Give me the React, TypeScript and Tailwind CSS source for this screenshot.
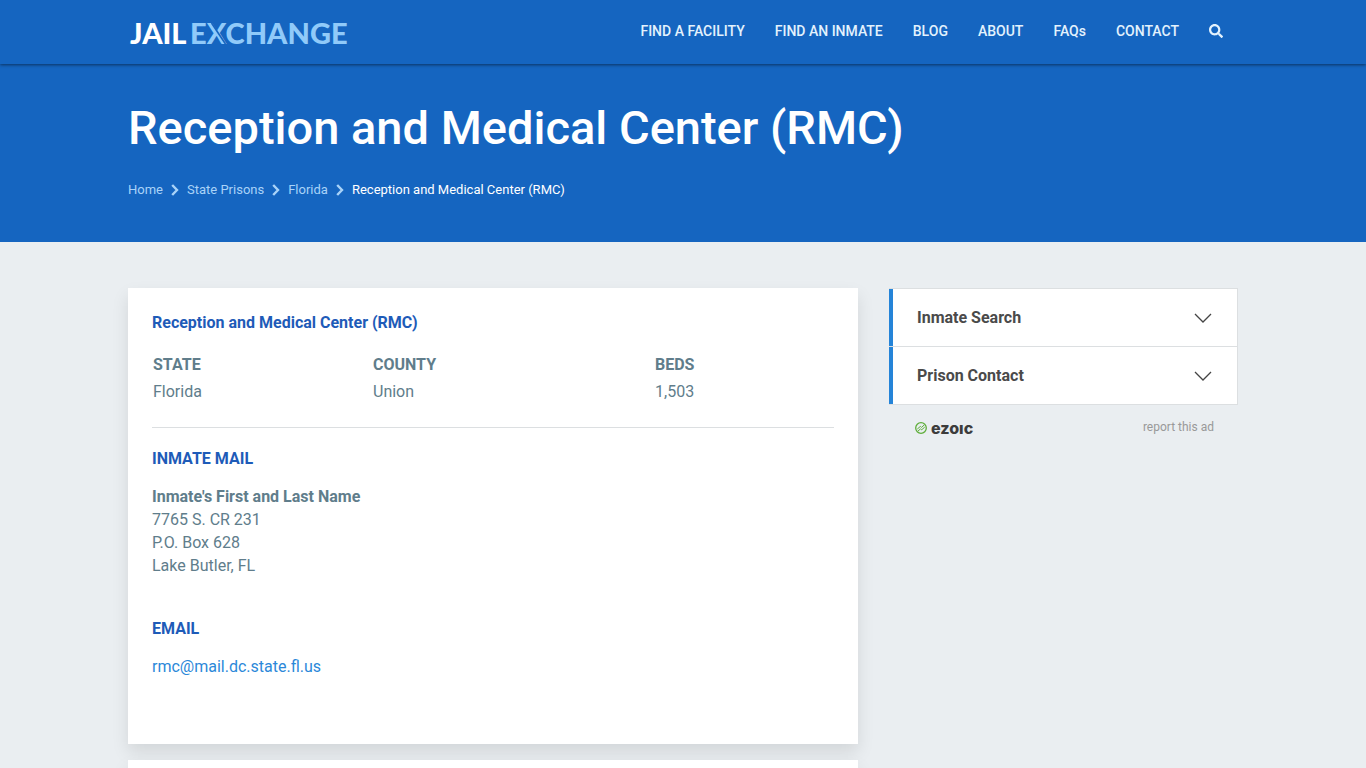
import React, { useState } from 'react';
import { FaSearch } from 'react-icons/fa';

const navLinks = ['FIND A FACILITY', 'FIND AN INMATE', 'BLOG', 'ABOUT', 'FAQs', 'CONTACT'];

const crumbs = ['Home', 'State Prisons', 'Florida'];

const panels = [
  { title: 'Inmate Search', body: 'Search the Florida state inmate list.' },
  { title: 'Prison Contact', body: '7765 S. CR 231, Lake Butler, FL' },
];

const Logo: React.FC = () => (
  <a href="#" aria-label="Jail Exchange">
    <svg width="232" height="44" viewBox="0 0 232 44" fontFamily="Lato, sans-serif" fontSize="29" fontWeight="900">
      <text x="2" y="34" fill="#ffffff">JAIL</text>
      <text x="62" y="34" fill="#90caf9">EXCHANGE</text>
      {/* slit along the X's long stroke */}
      <path d="M83.5 13L97.5 34" stroke="#1565c0" strokeWidth="1.6" />
    </svg>
  </a>
);

const CrumbArrow: React.FC = () => (
  <svg width="8" height="12" viewBox="0 0 8 12" fill="none" stroke="#a9d3f8" strokeWidth="2.4" aria-hidden="true">
    <path d="M1.2 1L6 6L1.2 11" />
  </svg>
);

const EzoicLogo: React.FC = () => (
  <a href="#" className="flex items-center gap-1 font-['Inter',sans-serif] text-base leading-4 font-extrabold text-[#3c3c3c]">
    <svg width="12" height="12" viewBox="0 0 12 12" fill="none" stroke="#5fae3b" aria-hidden="true">
      <circle cx="6" cy="6" r="5.3" strokeWidth="1.3" />
      <path d="M2.3 7L5.4 4.4L6.4 5.4L9 3.2M3 9L5.6 6.8L6.6 7.8L9.7 5.2" strokeWidth="1" />
    </svg>
    ezoıc
  </a>
);

const App: React.FC = () => {
  const [open, setOpen] = useState(-1);

  return (
    <div className="min-h-screen bg-[#eaeef1] font-['Roboto',sans-serif] text-base text-[#607d8b]">
      <header className="relative bg-[#1565c0] shadow-[0_1px_3px_rgba(0,0,0,0.5)]">
        <div className="mx-auto flex h-16 max-w-[1110px] items-center justify-between">
          <Logo />
          <nav className="flex items-center gap-[30px] pr-[15px] pb-0.5 text-sm font-medium text-[#e3f2fd]">
            {navLinks.map((link) => (
              <a key={link} href="#">{link}</a>
            ))}
            <button aria-label="Search" className="cursor-pointer">
              <FaSearch size={14} />
            </button>
          </nav>
        </div>
      </header>

      <section className="bg-[#1565c0] pt-8 pb-[43px] text-white">
        <div className="mx-auto max-w-[1110px]">
          <h1 className="text-[47px] leading-16 font-medium">Reception and Medical Center (RMC)</h1>
          <nav aria-label="Breadcrumb" className="mt-[21px] flex items-center gap-2 text-[13px] leading-[18px] text-[#a9d3f8]">
            {crumbs.map((crumb) => (
              <React.Fragment key={crumb}>
                <a href="#">{crumb}</a>
                <CrumbArrow />
              </React.Fragment>
            ))}
            <span className="text-white">Reception and Medical Center (RMC)</span>
          </nav>
        </div>
      </section>

      <div className="mx-auto flex max-w-[1110px] items-start gap-[30px] pt-[46px]">
        <main className="flex-1 space-y-4">
          <article className="bg-white px-6 pt-[25px] pb-[66px] shadow-[0_8px_16px_rgba(0,0,0,0.1)]">
            <h2 className="leading-5 font-bold text-[#1e5bb8]">Reception and Medical Center (RMC)</h2>
            <table className="mt-[19px] w-full text-left">
              <thead>
                <tr>
                  <th className="w-[220px] p-px font-bold">STATE</th>
                  <th className="w-[282px] p-px font-bold">COUNTY</th>
                  <th className="p-px font-bold">BEDS</th>
                </tr>
              </thead>
              <tbody>
                <tr>
                  <td className="p-px pt-0.5">Florida</td>
                  <td className="p-px pt-0.5">Union</td>
                  <td className="p-px pt-0.5">1,503</td>
                </tr>
              </tbody>
            </table>
            <hr className="mt-[22px] border-[#dcdfe1]" />

            <h3 className="mt-[21px] leading-5 font-bold text-[#1e5bb8]">INMATE MAIL</h3>
            <address className="mt-4 leading-[23px] not-italic">
              <strong className="font-bold">Inmate's First and Last Name</strong><br />
              7765 S. CR 231<br />
              P.O. Box 628<br />
              Lake Butler, FL
            </address>

            <h3 className="mt-[42px] leading-5 font-bold text-[#1e5bb8]">EMAIL</h3>
            <p className="mt-4 leading-[23px]">
              <a href="mailto:rmc@mail.dc.state.fl.us" className="text-[#2b88d9]">rmc@mail.dc.state.fl.us</a>
            </p>
          </article>
          <article className="h-24 bg-white shadow-[0_8px_16px_rgba(0,0,0,0.1)]" />
        </main>

        <aside className="w-[350px]">
          <div className="ml-px border-t border-r border-[#dcdfe1]">
            {panels.map((panel, i) => (
              <div key={panel.title} className="border-b border-[#dcdfe1]">
                <button
                  aria-expanded={open === i}
                  onClick={() => setOpen(open === i ? -1 : i)}
                  className="flex h-[57px] w-full cursor-pointer items-center justify-between border-l-4 border-[#2584d8] bg-white px-6 font-bold text-[#4a4a4a]"
                >
                  {panel.title}
                  <svg width="20" height="12" viewBox="0 0 20 12" fill="none" stroke="#444444" strokeWidth="1.3" aria-hidden="true">
                    <path d="M2 2L10 10L18 2" />
                  </svg>
                </button>
                {open === i && <p className="bg-white px-7 py-4">{panel.body}</p>}
              </div>
            ))}
          </div>
          <div className="mt-3 flex items-start justify-between pr-6 pl-[27px]">
            <div className="pt-[3px]"><EzoicLogo /></div>
            <a href="#" className="text-xs leading-5 text-[#999999]">report this ad</a>
          </div>
        </aside>
      </div>
    </div>
  );
};

export default App;
